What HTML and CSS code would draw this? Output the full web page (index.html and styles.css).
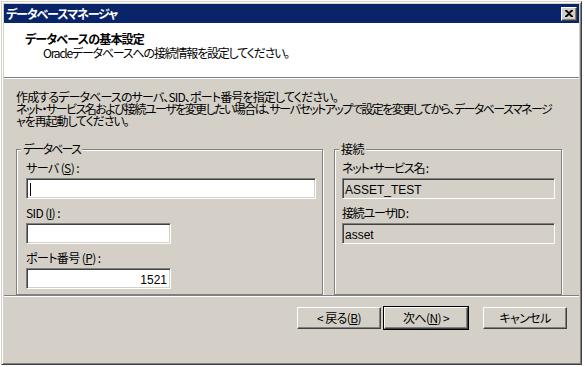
FILE: index.html
```html
<!DOCTYPE html>
<html lang="ja">
<head>
<meta charset="utf-8">
<link rel="stylesheet" href="styles.css">
</head>
<body>
<div class="window">
  <div class="titlebar">
    <span class="title">データベースマネージャ</span>
    <span class="close"><svg width="8" height="7" viewBox="0 0 8 7"><path d="M0 0h2l2 2 2-2h2v1L5 3.5 8 6v1H6L4 5 2 7H0V6l3-2.5L0 1z" fill="#000"/></svg></span>
  </div>
  <div class="header">
    <div class="h-title">データベースの基本設定</div>
    <div class="h-sub">Oracleデータベースへの接続情報を設定してください。</div>
  </div>
  <div class="sep"></div>
  <div class="body">
    <div class="desc">
      <span class="line l1">作成するデータベースのサーバ、SID、ポート番号を指定してください。</span>
      <span class="line l2">ネット・サービス名および接続ユーザを変更したい場合は、サーバセットアップで設定を変更してから、データベースマネージ</span>
      <span class="line l3">ャを再起動してください。</span>
    </div>
    <div class="groups">
      <fieldset class="group g-db">
        <legend>データベース</legend>
        <div class="field">
          <div class="label">サーバ (<u>S</u>) :</div>
          <div class="input in-wide"><span class="caret"></span></div>
        </div>
        <div class="field">
          <div class="label">SID (<u>I</u>) :</div>
          <div class="input in-short"></div>
        </div>
        <div class="field">
          <div class="label">ポート番号 (<u>P</u>) :</div>
          <div class="input in-short in-num">1521</div>
        </div>
      </fieldset>
      <fieldset class="group g-conn">
        <legend>接続</legend>
        <div class="field">
          <div class="label">ネット・サービス名 :</div>
          <div class="input in-ro">ASSET_TEST</div>
        </div>
        <div class="field">
          <div class="label">接続ユーザID :</div>
          <div class="input in-ro">asset</div>
        </div>
      </fieldset>
    </div>
  </div>
  <div class="sep"></div>
  <div class="footer">
    <button class="btn">&lt; 戻る(<u>B</u>)</button>
    <button class="btn btn-default">次へ(<u>N</u>) &gt;</button>
    <button class="btn btn-cancel">キャンセル</button>
  </div>
</div>
</body>
</html>
```

FILE: styles.css
```css
* { box-sizing: border-box; }
html, body { margin: 0; padding: 0; background: #ffffff; }
body {
  font-family: "Noto Sans CJK JP", "Liberation Sans", sans-serif;
  font-size: 12px;
  line-height: 12px;
  color: #000;
  font-feature-settings: "palt";
}
.window {
  margin: 1px 0 0 1px;
  width: 581px;
  height: 364px;
  background: #d4d0c8;
  border: 1px solid;
  border-color: #d4d0c8 #404040 #404040 #d4d0c8;
  box-shadow: inset 1px 1px 0 #fff, inset -1px -1px 0 #808080;
  padding: 2px;
  display: flex;
  flex-direction: column;
}
.titlebar {
  height: 19px;
  background: #0a246a;
  display: flex;
  align-items: center;
  justify-content: space-between;
  padding: 0 2px 0 2px;
  flex: none;
}
.title {
  color: #fff;
  font-weight: bold;
  font-size: 12px;
  letter-spacing: -1.1px;
}
.close {
  width: 16px;
  height: 14px;
  background: #d4d0c8;
  border: 1px solid;
  border-color: #fff #404040 #404040 #fff;
  box-shadow: inset -1px -1px 0 #808080;
  display: flex;
  align-items: center;
  justify-content: center;
  padding-bottom: 1px;
}
.header {
  height: 54px;
  background: #fff;
  padding: 10px 0 0 21px;
  flex: none;
}
.h-title {
  font-weight: bold;
  letter-spacing: -0.8px;
}
.h-sub {
  margin: 2px 0 0 18px;
  letter-spacing: -1.2px;
}
.sep {
  height: 2px;
  border-top: 1px solid #808080;
  border-bottom: 1px solid #fff;
  flex: none;
}
.body {
  flex: 1;
  padding: 12px 0 0 12px;
}
.desc .line {
  display: block;
  white-space: nowrap;
}
.l1 { letter-spacing: -0.85px; }
.l2 { letter-spacing: -1.55px; }
.l3 { letter-spacing: -1.1px; }
.groups {
  display: flex;
  gap: 11px;
  margin-top: 16px;
}
.group {
  margin: 0;
  padding: 7px 0 0 9px;
  border: 1px solid #808080;
  box-shadow: inset 1px 1px 0 #fff, 1px 1px 0 #fff;
  height: 152px;
  min-width: 0;
}
.group legend {
  padding: 0 2px;
  margin-left: -5px;
  background: #d4d0c8;
  line-height: 12px;
  letter-spacing: -1.8px;
}
.g-db { width: 307px; }
.g-conn { width: 228px; padding-left: 7px; }
.g-conn legend { margin-left: -3px; letter-spacing: -0.5px; }
.field { margin-bottom: 8px; }
.label { letter-spacing: -0.6px; margin-bottom: 4px; }
.g-conn .label { letter-spacing: -1.2px; }
.input {
  height: 21px;
  background: #fff;
  border: 1px solid;
  border-color: #808080 #fff #fff #808080;
  box-shadow: inset 1px 1px 0 #404040, inset -1px -1px 0 #d4d0c8;
  padding: 2px 3px 0 3px;
  display: flex;
  align-items: center;
  font-family: "Liberation Sans", "Noto Sans CJK JP", sans-serif;
  font-size: 12px;
  letter-spacing: 0;
}
.in-wide { width: 290px; }
.in-short { width: 145px; }
.in-num { justify-content: flex-end; }
.in-ro { width: 213px; background: #d4d0c8; padding-left: 2px; }
.caret {
  display: block;
  width: 1px;
  height: 13px;
  background: #000;
}
.footer {
  flex: 1;
  display: flex;
  align-items: flex-start;
  justify-content: flex-end;
  padding: 10px 12px 0 0;
}
.btn {
  width: 84px;
  height: 22px;
  margin: 0;
  padding: 0;
  font-family: "Noto Sans CJK JP", "Liberation Sans", sans-serif;
  font-size: 12px;
  line-height: 12px;
  letter-spacing: -0.6px;
  color: #000;
  background: #d4d0c8;
  border: 1px solid;
  border-color: #fff #404040 #404040 #fff;
  box-shadow: inset -1px -1px 0 #808080;
  font-feature-settings: "palt";
}
.btn-default {
  margin-left: 3px;
  box-shadow: 0 0 0 1px #000, inset -1px -1px 0 #808080;
}
.btn-cancel { margin-left: 15px; }
```
